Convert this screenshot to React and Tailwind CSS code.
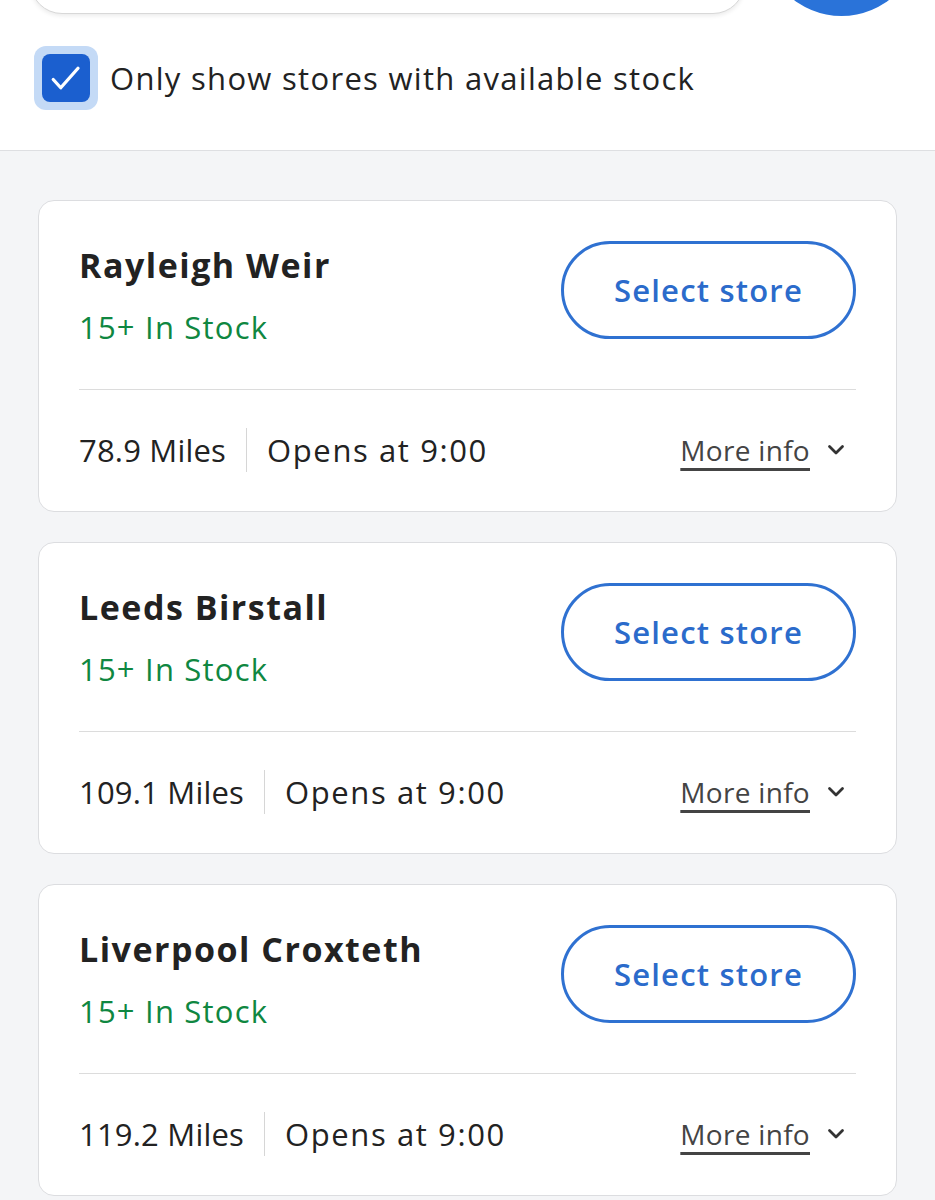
import React from "react";

const stores = [
  { name: "Rayleigh Weir", stock: "15+ In Stock", miles: "78.9 Miles", opens: "Opens at 9:00" },
  { name: "Leeds Birstall", stock: "15+ In Stock", miles: "109.1 Miles", opens: "Opens at 9:00" },
  { name: "Liverpool Croxteth", stock: "15+ In Stock", miles: "119.2 Miles", opens: "Opens at 9:00" },
];

const ChevronDown = () => (
  <svg width="20" height="14" viewBox="0 0 20 14" fill="none" stroke="#333" strokeWidth="2.8" strokeLinecap="round" strokeLinejoin="round">
    <path d="M3.5 3.5l6.5 6.5 6.5-6.5" />
  </svg>
);

const StoreCard = ({ store }) => (
  <div className="bg-white border border-[#dcdde0] rounded-[16px] px-[40px] pt-[40px] pb-[39px]">
    <div className="flex justify-between items-start">
      <div>
        <div className="text-[34px] leading-[48px] font-bold text-[#222] tracking-[1.5px]">{store.name}</div>
        <div className="mt-[14px] text-[31px] leading-[48px] font-medium text-[#0f8741] tracking-[1.2px]">{store.stock}</div>
      </div>
      <button className="w-[295px] h-[98px] rounded-full border-[3px] border-[#2f71d1] text-[#2b6bcb] text-[31px] font-semibold tracking-[1.2px]">
        Select store
      </button>
    </div>
    <div className="mt-[38px] h-px bg-[#dcdcdc]" />
    <div className="mt-[38px] flex items-center h-[44px] text-[31px] text-[#222]">
      <span className="tracking-[0.2px]">{store.miles}</span>
      <div className="mx-[20px] w-px h-[44px] bg-[#d6d6d6]" />
      <span className="tracking-[1.6px]">{store.opens}</span>
      <div className="ml-auto flex items-center gap-[16px] mr-[10px]">
        <span className="text-[#444] text-[28px] tracking-[0.3px] underline decoration-[3px] underline-offset-[7px]">More info</span>
        <ChevronDown />
      </div>
    </div>
  </div>
);

export default function App() {
  return (
    <div className="min-h-[1200px] bg-[#f4f5f7] overflow-hidden" style={{ fontFamily: '"Open Sans", "Liberation Sans", sans-serif' }}>
      <div className="bg-white border-b border-[#dedfe2] pb-[40px]">
        <div className="flex items-end -mt-[141px] h-[157px]">
          <div className="ml-[30px] w-[715px] h-[100px] mb-[2px] rounded-[32px] border border-[#d8d8d8] bg-white shadow-[0_2px_4px_rgba(0,0,0,0.08)]" />
          <div className="ml-[18px] w-[157px] h-[157px] rounded-full bg-[#2a73d9]" />
        </div>
        <div className="mt-[30px] flex items-center">
          <div className="ml-[34px] w-[64px] h-[64px] rounded-[12px] bg-[#c4daf6] flex items-center justify-center">
            <div className="w-[48px] h-[48px] rounded-[8px] bg-[#1b5fcf] flex items-center justify-center">
              <svg width="36" height="36" viewBox="0 0 24 24" fill="none" stroke="white" strokeWidth="2.2" strokeLinecap="round" strokeLinejoin="round">
                <path d="M3.5 13l5 5.5L20 5.5" />
              </svg>
            </div>
          </div>
          <span className="ml-[12px] text-[31px] text-[#222] tracking-[1.3px]">Only show stores with available stock</span>
        </div>
      </div>
      <div className="px-[38px] pt-[49px] flex flex-col gap-[30px]">
        {stores.map((s) => (
          <StoreCard key={s.name} store={s} />
        ))}
      </div>
    </div>
  );
}
